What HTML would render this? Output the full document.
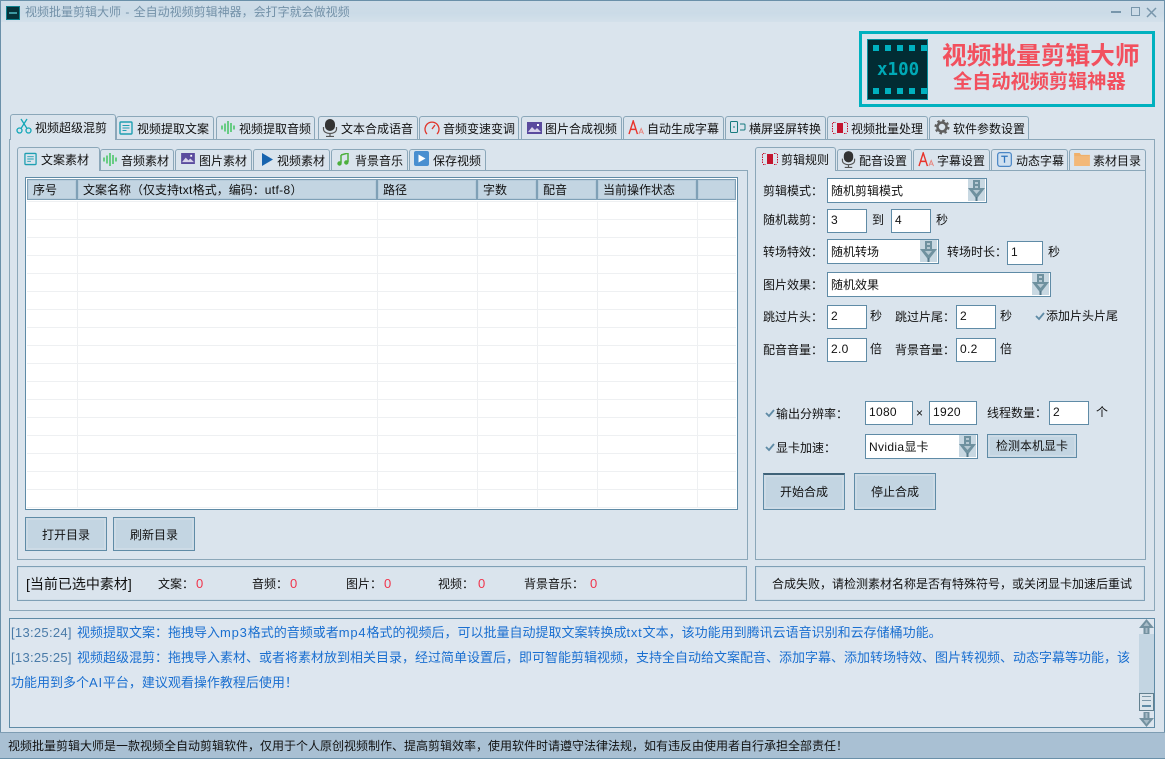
<!DOCTYPE html>
<html lang="zh-CN"><head><meta charset="utf-8"><title>视频批量剪辑大师</title>
<style>
html,body{margin:0;padding:0;background:#dae4ed}
#w{position:relative;width:1165px;height:759px;overflow:hidden;background:#dae4ed;font:12px/16px "Liberation Sans","Noto Sans CJK SC",sans-serif;color:#111}
#w div,#w span.t,#w svg{position:absolute;box-sizing:border-box}
.t{white-space:nowrap;position:absolute}
.tab{background:#dae4ed;border:1px solid #8ba7b9;border-bottom:none;border-radius:3px 3px 0 0}
.panel{border:1px solid #8ba7b9;background:#dae4ed}
.inp{background:#fff;border:1px solid #5f8ba6;padding:2px 0 0 3px;line-height:16px;height:24px;letter-spacing:.3px}
.cb{background:#fff;border:1px solid #5f8ba6;padding:4px 0 0 3px;height:25px}
.btn{background:#c3d5e2;border:1px solid #5f8ba6;box-shadow:inset 0 0 0 2px #cddbe6;text-align:center}
.hd{background:#c3d5e2;border:1px solid #7fa0b6;box-shadow:inset 0 0 0 1px #b7ccdb;top:179px;height:21px;padding:2px 0 0 5px}
.ln{background:#eef0f2}
.red{color:#f0354c;font-size:13px}
.log{color:#1a6fd0;font-size:13px;left:11px;line-height:18px}
.log i{font-style:normal;color:#4a7ba8;display:inline-block;width:66px;letter-spacing:.3px}
.l{letter-spacing:.8px}
.s{letter-spacing:.35px}
</style></head><body><div id="w">
<svg width="0" height="0" style="left:0;top:0"><defs>
<symbol id="arr" viewBox="0 0 17 22"><rect width="17" height="22" fill="#c8d8e2"/><path d="M5 1h7v8h5l-8.500 11L0 9h5z" fill="#6f919f"/><path d="M7 3h3v2H7zM7 7h3v2H7zM5 11h7l-3.500 4z" fill="#b5c8d2"/><path d="M7.500 18h2v4h-2z" fill="#55798a"/></symbol>
<symbol id="doc" viewBox="0 0 14 14"><rect x="1" y="1" width="12" height="12" rx="1" fill="none" stroke="#1f9fb2" stroke-width="1.400"/><path d="M3.500 4.500h7M3.500 7h7M3.500 9.500h4" stroke="#1f9fb2" fill="none"/></symbol>
<symbol id="wav" viewBox="0 0 14 13"><path d="M1 4.500v4M4 2.500v8M7 0v13M10 2v9M13 4.500v4" stroke="#62cb7e" stroke-width="1.900" fill="none"/></symbol>
<symbol id="mic" viewBox="0 0 16 18"><rect x="3" y="0" width="10" height="12" rx="5" fill="#333"/><path d="M1.500 8v2c0 6 13 6 13 0V8M8 15v2M4 17.500h8" stroke="#555" stroke-width="1.200" fill="none"/></symbol>
<symbol id="pic" viewBox="0 0 15 12"><rect width="15" height="12" fill="#5a4b9e"/><path d="M1 10l4-5 3 3 2-2 4 4z" fill="#d7d3ea"/><rect x="10" y="2" width="2" height="2" fill="#fff"/></symbol>
<symbol id="aa" viewBox="0 0 18 16"><path d="M1 15L5.500 1 10 15M2.500 10h6" stroke="#e8332a" stroke-width="1.500" fill="none"/><path d="M11.500 15l2.500-6 2.500 6M12.500 13h3" stroke="#e8837c" fill="none"/></symbol>
<symbol id="film" viewBox="0 0 16 12"><rect x="5" y="1" width="6" height="10" fill="#c3152f"/><path d="M1 .500h3M12 .500h3M1 11.500h3M12 11.500h3M.500 1v10M15.500 1v10" stroke="#c3152f" stroke-dasharray="1.500 1" fill="none"/></symbol>
</defs></svg>

<!-- window frame -->
<div style="left:0;top:0;width:1165px;height:22px;background:linear-gradient(#cfdde8,#cbdbe7 60%,#d3e0ea)"></div>
<div style="left:0;top:0;width:1165px;height:1px;background:#6a90a9"></div>
<div style="left:0;top:0;width:1px;height:759px;background:#6a90a9"></div>
<div style="left:1164px;top:0;width:1px;height:759px;background:#6a90a9"></div>
<div style="left:6px;top:6px;width:14px;height:14px;background:#06333a;border:1px solid #0d7f8c"></div>
<div style="left:9px;top:12px;width:8px;height:2px;background:#3d9aa3"></div>
<span class="t" style="left:25px;top:4px;color:#7391a8;word-spacing:1px">视频批量剪辑大师 - 全自动视频剪辑神器，会打字就会做视频</span>
<div style="left:1111px;top:11px;width:10px;height:2px;background:#7896ab"></div>
<div style="left:1131px;top:7px;width:9px;height:9px;border:1.500px solid #7896ab"></div>
<svg style="left:1146px;top:7px" width="11" height="11"><path d="M1 1l9 9M10 1l-9 9" stroke="#7896ab" stroke-width="1.500"/></svg>

<!-- logo -->
<div style="left:859px;top:31px;width:296px;height:76px;border:3px solid #00b1bf;background:#dae4ed"></div>
<div style="left:867px;top:39px;width:61px;height:61px;background:#022c33;border:1px solid #08919f"></div>
<div style="left:873px;top:45px;width:54px;height:6px;background:repeating-linear-gradient(90deg,#00b1bf 0 6px,transparent 6px 12px)"></div>
<div style="left:873px;top:88px;width:54px;height:6px;background:repeating-linear-gradient(90deg,#00b1bf 0 6px,transparent 6px 12px)"></div>
<span class="t" style="left:877px;top:59px;font:bold 17.500px/22px 'DejaVu Sans Mono',monospace;color:#00a9b6">x100</span>
<span class="t" style="left:942px;top:41px;font-size:24.700px;line-height:32px;font-weight:bold;color:#f2505e">视频批量剪辑大师</span>
<span class="t" style="left:953px;top:70px;font-size:19.200px;line-height:26px;font-weight:bold;color:#f2505e">全自动视频剪辑神器</span>

<!-- main panel and tabs -->
<div class="panel" style="left:9px;top:139px;width:1146px;height:472px"></div>
<div class="tab" style="left:10px;top:114px;width:106px;height:26px;z-index:2"></div>
<div class="tab" style="left:116px;top:116px;width:98px;height:23px"></div>
<div class="tab" style="left:216px;top:116px;width:99px;height:23px"></div>
<div class="tab" style="left:318px;top:116px;width:100px;height:23px"></div>
<div class="tab" style="left:419px;top:116px;width:100px;height:23px"></div>
<div class="tab" style="left:521px;top:116px;width:101px;height:23px"></div>
<div class="tab" style="left:623px;top:116px;width:101px;height:23px"></div>
<div class="tab" style="left:725px;top:116px;width:101px;height:23px"></div>
<div class="tab" style="left:827px;top:116px;width:101px;height:23px"></div>
<div class="tab" style="left:929px;top:116px;width:100px;height:23px"></div>
<svg style="left:16px;top:118px;z-index:3" width="16" height="16" viewBox="0 0 16 16"><circle cx="3.500" cy="12.500" r="2.500" fill="none" stroke="#13a7b8" stroke-width="1.300"/><circle cx="12.500" cy="12.500" r="2.500" fill="none" stroke="#13a7b8" stroke-width="1.300"/><path d="M5 10.500L11 1M11 10.500L5 1" stroke="#13a7b8" stroke-width="1.300" fill="none"/></svg>
<span class="t" style="left:35px;top:120px;z-index:3">视频超级混剪</span>
<svg style="left:119px;top:121px" width="14" height="14"><use href="#doc"/></svg><span class="t" style="left:137px;top:121px">视频提取文案</span>
<svg style="left:221px;top:121px" width="14" height="13"><use href="#wav"/></svg><span class="t" style="left:239px;top:121px">视频提取音频</span>
<svg style="left:322px;top:119px" width="16" height="18"><use href="#mic"/></svg><span class="t" style="left:341px;top:121px">文本合成语音</span>
<svg style="left:424px;top:121px" width="16" height="14" viewBox="0 0 16 14"><path d="M3 13A7 7 0 1 1 13 13M8 8l3-4" fill="none" stroke="#e0352b" stroke-width="1.300"/></svg><span class="t" style="left:443px;top:121px">音频变速变调</span>
<svg style="left:527px;top:122px" width="15" height="12"><use href="#pic"/></svg><span class="t" style="left:545px;top:121px">图片合成视频</span>
<svg style="left:628px;top:120px" width="17" height="15"><use href="#aa"/></svg><span class="t" style="left:647px;top:121px">自动生成字幕</span>
<svg style="left:730px;top:121px" width="16" height="13" viewBox="0 0 16 13"><rect x=".5" y=".5" width="7" height="11" rx="1" fill="none" stroke="#167a7e"/><path d="M10 3h4a1 1 0 0 1 1 1v4a1 1 0 0 1-1 1h-4M3 6h2" fill="none" stroke="#167a7e"/></svg><span class="t" style="left:749px;top:121px">横屏竖屏转换</span>
<svg style="left:832px;top:122px" width="16" height="12"><use href="#film"/></svg><span class="t" style="left:851px;top:121px">视频批量处理</span>
<svg style="left:934px;top:119px" width="16" height="16" viewBox="0 0 16 16"><circle cx="8" cy="8" r="4.500" fill="none" stroke="#5f5f5f" stroke-width="2.500"/><circle cx="8" cy="8" r="6.500" fill="none" stroke="#5f5f5f" stroke-width="2" stroke-dasharray="2.500 2.600"/></svg><span class="t" style="left:953px;top:121px">软件参数设置</span>

<!-- left sub panel -->
<div class="panel" style="left:17px;top:170px;width:731px;height:390px"></div>
<div class="tab" style="left:17px;top:147px;width:83px;height:24px;z-index:2"></div>
<div class="tab" style="left:100px;top:149px;width:74px;height:21px"></div>
<div class="tab" style="left:175px;top:149px;width:77px;height:21px"></div>
<div class="tab" style="left:253px;top:149px;width:77px;height:21px"></div>
<div class="tab" style="left:331px;top:149px;width:77px;height:21px"></div>
<div class="tab" style="left:409px;top:149px;width:77px;height:21px"></div>
<svg style="left:24px;top:152px;z-index:3" width="13" height="14"><use href="#doc"/></svg><span class="t" style="left:41px;top:152px;z-index:3">文案素材</span>
<svg style="left:103px;top:153px" width="14" height="13"><use href="#wav"/></svg><span class="t" style="left:121px;top:153px">音频素材</span>
<svg style="left:181px;top:153px" width="14" height="11"><use href="#pic"/></svg><span class="t" style="left:199px;top:153px">图片素材</span>
<svg style="left:261px;top:153px" width="12" height="13" viewBox="0 0 12 13"><path d="M1 0l11 6.500L1 13z" fill="#1763ae"/></svg><span class="t" style="left:277px;top:153px">视频素材</span>
<svg style="left:337px;top:153px" width="12" height="13" viewBox="0 0 12 13"><path d="M4 2l7-2v9" fill="none" stroke="#4caf3c" stroke-width="1.500"/><path d="M4 2v8" stroke="#4caf3c" stroke-width="1.500"/><circle cx="2.500" cy="10.500" r="2.200" fill="#4caf3c"/><circle cx="9.300" cy="9.500" r="2.200" fill="#4caf3c"/></svg><span class="t" style="left:355px;top:153px">背景音乐</span>
<svg style="left:414px;top:151px" width="15" height="15" viewBox="0 0 15 15"><rect width="15" height="15" rx="2" fill="#4a8fd0"/><path d="M4.500 3.500l7 4-7 4z" fill="#fff"/></svg><span class="t" style="left:433px;top:153px">保存视频</span>

<!-- table -->
<div style="left:25px;top:177px;width:713px;height:333px;background:#fff;border:1px solid #5f8ba6"></div>
<div class="hd" style="left:27px;width:50px">序号</div>
<div class="hd" style="left:77px;width:300px">文案名称（仅支持<span class="s">txt</span>格式，编码：<span class="s">utf-8</span>）</div>
<div class="hd" style="left:377px;width:100px">路径</div>
<div class="hd" style="left:477px;width:60px">字数</div>
<div class="hd" style="left:537px;width:60px">配音</div>
<div class="hd" style="left:597px;width:100px">当前操作状态</div>
<div class="hd" style="left:697px;width:39px"></div>
<div class="ln" style="left:27px;top:201px;width:709px;height:306px;background:repeating-linear-gradient(180deg,#eef0f2 0 1px,transparent 1px 18px)"></div>
<div class="ln" style="left:27px;top:507px;width:709px;height:1px"></div>
<div class="ln" style="left:77px;top:201px;width:1px;height:306px"></div>
<div class="ln" style="left:377px;top:201px;width:1px;height:306px"></div>
<div class="ln" style="left:477px;top:201px;width:1px;height:306px"></div>
<div class="ln" style="left:537px;top:201px;width:1px;height:306px"></div>
<div class="ln" style="left:597px;top:201px;width:1px;height:306px"></div>
<div class="ln" style="left:697px;top:201px;width:1px;height:306px"></div>

<div class="btn" style="left:25px;top:517px;width:82px;height:34px;padding-top:9px">打开目录</div>
<div class="btn" style="left:113px;top:517px;width:82px;height:34px;padding-top:9px">刷新目录</div>

<!-- right sub panel -->
<div class="panel" style="left:755px;top:170px;width:391px;height:390px"></div>
<div class="tab" style="left:755px;top:147px;width:81px;height:24px;z-index:2"></div>
<div class="tab" style="left:837px;top:149px;width:75px;height:21px"></div>
<div class="tab" style="left:913px;top:149px;width:77px;height:21px"></div>
<div class="tab" style="left:991px;top:149px;width:77px;height:21px"></div>
<div class="tab" style="left:1069px;top:149px;width:77px;height:21px"></div>
<svg style="left:762px;top:153px;z-index:3" width="16" height="12"><use href="#film"/></svg><span class="t" style="left:781px;top:152px;z-index:3">剪辑规则</span>
<svg style="left:841px;top:151px" width="15" height="17"><use href="#mic"/></svg><span class="t" style="left:859px;top:153px">配音设置</span>
<svg style="left:918px;top:152px" width="17" height="15"><use href="#aa"/></svg><span class="t" style="left:937px;top:153px">字幕设置</span>
<svg style="left:997px;top:152px" width="15" height="15" viewBox="0 0 16 16"><rect x=".7" y=".7" width="14.600" height="14.600" rx="2.500" fill="#cfe0f0" stroke="#4a86c5" stroke-width="1.300"/><path d="M4.500 4.500h7M8 4.500v7" stroke="#2f74bd" stroke-width="1.400"/></svg><span class="t" style="left:1016px;top:153px">动态字幕</span>
<svg style="left:1074px;top:153px" width="16" height="13" viewBox="0 0 17 14"><path d="M0 0h6l1.500 2H17v2H0z" fill="#f0b06a"/><rect y="4" width="17" height="10" fill="#f3b878"/></svg><span class="t" style="left:1093px;top:153px">素材目录</span>

<!-- form -->
<span class="t" style="left:763px;top:183px">剪辑模式：</span>
<div class="cb" style="left:827px;top:178px;width:160px">随机剪辑模式</div>
<svg style="left:968px;top:179px" width="17" height="22"><use href="#arr"/></svg>
<span class="t" style="left:763px;top:212px">随机裁剪：</span>
<div class="inp" style="left:827px;top:209px;width:40px">3</div>
<span class="t" style="left:872px;top:212px">到</span>
<div class="inp" style="left:891px;top:209px;width:40px">4</div>
<span class="t" style="left:936px;top:212px">秒</span>
<span class="t" style="left:763px;top:244px">转场特效：</span>
<div class="cb" style="left:827px;top:239px;width:112px">随机转场</div>
<svg style="left:920px;top:240px" width="17" height="22"><use href="#arr"/></svg>
<span class="t" style="left:947px;top:244px">转场时长：</span>
<div class="inp" style="left:1007px;top:241px;width:36px">1</div>
<span class="t" style="left:1048px;top:244px">秒</span>
<span class="t" style="left:763px;top:277px">图片效果：</span>
<div class="cb" style="left:827px;top:272px;width:224px">随机效果</div>
<svg style="left:1032px;top:273px" width="17" height="22"><use href="#arr"/></svg>
<span class="t" style="left:763px;top:309px">跳过片头：</span>
<div class="inp" style="left:827px;top:305px;width:40px">2</div>
<span class="t" style="left:870px;top:308px">秒</span>
<span class="t" style="left:895px;top:309px">跳过片尾：</span>
<div class="inp" style="left:956px;top:305px;width:40px">2</div>
<span class="t" style="left:1000px;top:308px">秒</span>
<svg style="left:1035px;top:312px" width="10" height="9"><path d="M1 4l3 3 5-6" fill="none" stroke="#5f8ba6" stroke-width="1.800"/></svg>
<span class="t" style="left:1046px;top:308px">添加片头片尾</span>
<span class="t" style="left:763px;top:342px">配音音量：</span>
<div class="inp" style="left:827px;top:338px;width:40px">2.0</div>
<span class="t" style="left:870px;top:341px">倍</span>
<span class="t" style="left:895px;top:342px">背景音量：</span>
<div class="inp" style="left:956px;top:338px;width:40px">0.2</div>
<span class="t" style="left:1000px;top:341px">倍</span>

<svg style="left:765px;top:409px" width="10" height="9"><path d="M1 4l3 3 5-6" fill="none" stroke="#5f8ba6" stroke-width="1.800"/></svg>
<span class="t" style="left:776px;top:406px">输出分辨率：</span>
<div class="inp" style="left:865px;top:401px;width:48px">1080</div>
<span class="t" style="left:916px;top:405px">×</span>
<div class="inp" style="left:929px;top:401px;width:48px">1920</div>
<span class="t" style="left:987px;top:405px">线程数量：</span>
<div class="inp" style="left:1049px;top:401px;width:40px">2</div>
<span class="t" style="left:1096px;top:404px">个</span>
<svg style="left:765px;top:443px" width="10" height="9"><path d="M1 4l3 3 5-6" fill="none" stroke="#5f8ba6" stroke-width="1.800"/></svg>
<span class="t" style="left:776px;top:440px">显卡加速：</span>
<div class="cb" style="left:865px;top:434px;width:113px;padding-left:3px"><span class="s">Nvidia</span>显卡</div>
<svg style="left:959px;top:435px" width="17" height="22"><use href="#arr"/></svg>
<div class="btn" style="left:987px;top:434px;width:90px;height:24px;padding-top:3px">检测本机显卡</div>
<div class="btn" style="left:763px;top:473px;width:82px;height:37px;padding-top:9px;border-top:2px solid #3f6278">开始合成</div>
<div class="btn" style="left:854px;top:473px;width:82px;height:37px;padding-top:10px">停止合成</div>

<!-- status row -->
<div style="left:17px;top:566px;width:730px;height:35px;border:1px solid #7fa0b6;box-shadow:inset 0 0 0 1px #d0dde7"></div>
<span class="t" style="left:26px;top:576px;font-size:14px">[当前已选中素材]</span>
<span class="t" style="left:158px;top:576px">文案：</span><span class="t red" style="left:196px;top:576px">0</span>
<span class="t" style="left:252px;top:576px">音频：</span><span class="t red" style="left:290px;top:576px">0</span>
<span class="t" style="left:346px;top:576px">图片：</span><span class="t red" style="left:384px;top:576px">0</span>
<span class="t" style="left:438px;top:576px">视频：</span><span class="t red" style="left:478px;top:576px">0</span>
<span class="t" style="left:524px;top:576px">背景音乐：</span><span class="t red" style="left:590px;top:576px">0</span>
<div style="left:755px;top:566px;width:390px;height:35px;border:1px solid #7fa0b6;box-shadow:inset 0 0 0 1px #d0dde7"></div>
<span class="t" style="left:772px;top:576px">合成失败，请检测素材名称是否有特殊符号，或关闭显卡加速后重试</span>

<!-- log -->
<div style="left:9px;top:618px;width:1146px;height:110px;border:1px solid #5f8ba6;background:#dde6ef"></div>
<span class="t log" style="top:624px"><i>[13:25:24]</i>视频提取文案：拖拽导入<span class="l">mp3</span>格式的音频或者<span class="l">mp4</span>格式的视频后，可以批量自动提取文案转换成<span class="l">txt</span>文本，该功能用到腾讯云语音识别和云存储桶功能。</span>
<span class="t log" style="top:649px"><i>[13:25:25]</i>视频超级混剪：拖拽导入素材、或者将素材放到相关目录，经过简单设置后，即可智能剪辑视频，支持全自动给文案配音、添加字幕、添加转场特效、图片转视频、动态字幕等功能，该</span>
<span class="t log" style="top:674px">功能用到多个<span class="l">AI</span>平台，建议观看操作教程后使用！</span>
<div style="left:1139px;top:634px;width:15px;height:59px;background:#c3d5e2"></div>
<svg style="left:1139px;top:619px" width="15" height="15" viewBox="0 0 15 15"><path d="M7.500 0l7.500 9h-4.500v6h-6V9H0z" fill="#7391a0"/><path d="M7.500 3l3 4h-6zM6.500 9h2v5h-2z" fill="#a8bcc8"/></svg>
<div style="left:1139px;top:693px;width:15px;height:18px;background:#dbe5ec;border:1.500px solid #62808f"></div>
<div style="left:1142px;top:696px;width:9px;height:1px;background:#7a97a8"></div>
<div style="left:1142px;top:700px;width:9px;height:1px;background:#7a97a8"></div>
<div style="left:1142px;top:705px;width:9px;height:2px;background:#5f8ba6"></div>
<svg style="left:1139px;top:712px" width="15" height="15" viewBox="0 0 15 15"><path d="M7.500 15L15 6h-4.500V0h-6v6H0z" fill="#7391a0"/><path d="M7.500 12l3-4h-6zM6.500 6h2V1h-2z" fill="#a8bcc8"/></svg>

<!-- status bar -->
<div style="left:0;top:732px;width:1165px;height:27px;background:#a9c0d3;border-top:1px solid #7e9db3;border-bottom:1px solid #6a90a9"></div>
<span class="t" style="left:8px;top:738px">视频批量剪辑大师是一款视频全自动剪辑软件，仅用于个人原创视频制作、提高剪辑效率，使用软件时请遵守法律法规，如有违反由使用者自行承担全部责任！</span>
</div></body></html>
